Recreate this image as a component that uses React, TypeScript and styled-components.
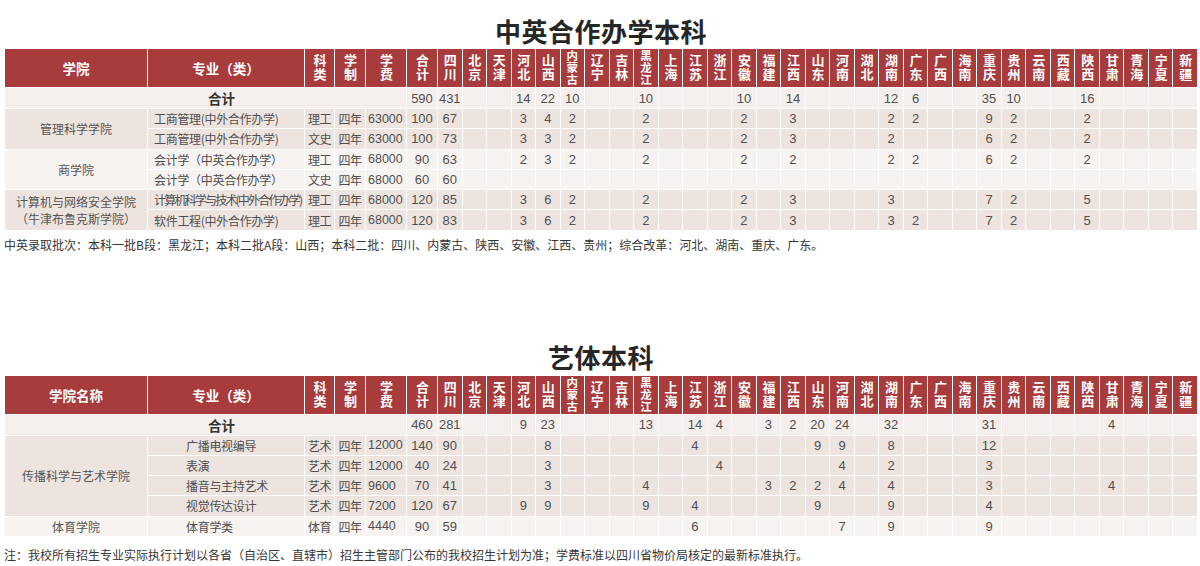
import React from "react";
import styled, { createGlobalStyle } from "styled-components";

const GlobalStyle = createGlobalStyle`
  html, body { margin: 0; padding: 0; background: #ffffff; }
  body { font-family: "Noto Sans CJK SC", "Noto Sans", sans-serif; color: #444; }
`;

const PROVINCES = [
  "四川", "北京", "天津", "河北", "山西", "内蒙古", "辽宁", "吉林", "黑龙江", "上海",
  "江苏", "浙江", "安徽", "福建", "江西", "山东", "河南", "湖北", "湖南", "广东",
  "广西", "海南", "重庆", "贵州", "云南", "西藏", "陕西", "甘肃", "青海", "宁夏", "新疆",
];

type Values = Record<string, number>;
type MajorRow = { major: string; kind: string; years: string; fee: string; total: number; v: Values; tight?: boolean };
type Group = { name: string[]; shade: "dark" | "light"; rows: MajorRow[] };
type TableData = { collegeLabel: string; indent: number; rowH: number; total: { total: number; v: Values }; groups: Group[] };

const coop: TableData = {
  collegeLabel: "学院",
  indent: 6,
  rowH: 20.3,
  total: { total: 590, v: { 四川: 431, 河北: 14, 山西: 22, 内蒙古: 10, 黑龙江: 10, 安徽: 10, 江西: 14, 湖南: 12, 广东: 6, 重庆: 35, 贵州: 10, 陕西: 16 } },
  groups: [
    {
      name: ["管理科学学院"], shade: "dark", rows: [
        { major: "工商管理(中外合作办学)", kind: "理工", years: "四年", fee: "63000", total: 100, v: { 四川: 67, 河北: 3, 山西: 4, 内蒙古: 2, 黑龙江: 2, 安徽: 2, 江西: 3, 湖南: 2, 广东: 2, 重庆: 9, 贵州: 2, 陕西: 2 } },
        { major: "工商管理(中外合作办学)", kind: "文史", years: "四年", fee: "63000", total: 100, v: { 四川: 73, 河北: 3, 山西: 3, 内蒙古: 2, 黑龙江: 2, 安徽: 2, 江西: 3, 湖南: 2, 重庆: 6, 贵州: 2, 陕西: 2 } },
      ],
    },
    {
      name: ["商学院"], shade: "light", rows: [
        { major: "会计学（中英合作办学）", kind: "理工", years: "四年", fee: "68000", total: 90, v: { 四川: 63, 河北: 2, 山西: 3, 内蒙古: 2, 黑龙江: 2, 安徽: 2, 江西: 2, 湖南: 2, 广东: 2, 重庆: 6, 贵州: 2, 陕西: 2 } },
        { major: "会计学（中英合作办学）", kind: "文史", years: "四年", fee: "68000", total: 60, v: { 四川: 60 } },
      ],
    },
    {
      name: ["计算机与网络安全学院", "（牛津布鲁克斯学院）"], shade: "dark", rows: [
        { major: "计算机科学与技术(中外合作办学)", tight: true, kind: "理工", years: "四年", fee: "68000", total: 120, v: { 四川: 85, 河北: 3, 山西: 6, 内蒙古: 2, 黑龙江: 2, 安徽: 2, 江西: 3, 湖南: 3, 重庆: 7, 贵州: 2, 陕西: 5 } },
        { major: "软件工程(中外合作办学)", kind: "理工", years: "四年", fee: "68000", total: 120, v: { 四川: 83, 河北: 3, 山西: 6, 内蒙古: 2, 黑龙江: 2, 安徽: 2, 江西: 3, 湖南: 3, 广东: 2, 重庆: 7, 贵州: 2, 陕西: 5 } },
      ],
    },
  ],
};

const arts: TableData = {
  collegeLabel: "学院名称",
  indent: 38,
  rowH: 20.2,
  total: { total: 460, v: { 四川: 281, 河北: 9, 山西: 23, 黑龙江: 13, 江苏: 14, 浙江: 4, 福建: 3, 江西: 2, 山东: 20, 河南: 24, 湖南: 32, 重庆: 31, 甘肃: 4 } },
  groups: [
    {
      name: ["传播科学与艺术学院"], shade: "dark", rows: [
        { major: "广播电视编导", kind: "艺术", years: "四年", fee: "12000", total: 140, v: { 四川: 90, 山西: 8, 江苏: 4, 山东: 9, 河南: 9, 湖南: 8, 重庆: 12 } },
        { major: "表演", kind: "艺术", years: "四年", fee: "12000", total: 40, v: { 四川: 24, 山西: 3, 浙江: 4, 河南: 4, 湖南: 2, 重庆: 3 } },
        { major: "播音与主持艺术", kind: "艺术", years: "四年", fee: "9600", total: 70, v: { 四川: 41, 山西: 3, 黑龙江: 4, 福建: 3, 江西: 2, 山东: 2, 河南: 4, 湖南: 4, 重庆: 3, 甘肃: 4 } },
        { major: "视觉传达设计", kind: "艺术", years: "四年", fee: "7200", total: 120, v: { 四川: 67, 河北: 9, 山西: 9, 黑龙江: 9, 江苏: 4, 山东: 9, 湖南: 9, 重庆: 4 } },
      ],
    },
    {
      name: ["体育学院"], shade: "light", rows: [
        { major: "体育学类", kind: "体育", years: "四年", fee: "4440", total: 90, v: { 四川: 59, 江苏: 6, 河南: 7, 湖南: 9, 重庆: 9 } },
      ],
    },
  ],
};

const SHADES = { total: "#f4efed", dark: "#ede4e0", light: "#f7f3f1" };

const Page = styled.div`
  width: 1200px;
  height: 566px;
  overflow: hidden;
  box-sizing: border-box;
  padding-left: 4px;
  display: flex;
  flex-direction: column;
`;

const Title = styled.h1<{ $top: number; $bottom: number }>`
  width: 1194px;
  margin: ${(p) => p.$top}px 0 ${(p) => p.$bottom}px;
  font-family: "Noto Sans CJK SC", sans-serif;
  font-size: 26px;
  line-height: 26px;
  font-weight: 700;
  color: #262626;
  text-align: center;
  letter-spacing: 0.5px;
`;

const Table = styled.table`
  width: 1194px;
  border-collapse: collapse;
  table-layout: fixed;
`;

const Col = styled.col<{ $w?: number }>`
  width: ${(p) => (p.$w ? `${p.$w}px` : "auto")};
`;

const HeadRow = styled.tr`
  height: 39px;
`;

const HeadCell = styled.th`
  background: #a83b3c;
  color: #ffffff;
  border: 1px solid #ffffff;
  padding: 0;
  font-family: "Noto Sans CJK SC", sans-serif;
  font-weight: 700;
  font-size: 13.5px;
  text-align: center;
  vertical-align: middle;
`;

const HeadBox = styled.div`
  height: 37px;
  display: flex;
  align-items: center;
  justify-content: center;
`;

const Vertical = styled.span<{ $small?: boolean }>`
  writing-mode: vertical-rl;
  text-orientation: upright;
  font-size: ${(p) => (p.$small ? "11.5px" : "13px")};
  line-height: 14px;
  letter-spacing: ${(p) => (p.$small ? "0.3px" : "0.6px")};
  white-space: nowrap;
`;

const BodyRow = styled.tr<{ $shade: keyof typeof SHADES; $h: number }>`
  height: ${(p) => p.$h}px;
  background: ${(p) => SHADES[p.$shade]};
`;

const Cell = styled.td`
  border: 1px solid #ffffff;
  padding: 0;
  white-space: nowrap;
  overflow: hidden;
  vertical-align: middle;
  color: #4a4a4a;
`;

const TotalLabel = styled(Cell)`
  padding-left: 32px;
  text-align: center;
  font-family: "Noto Sans CJK SC", sans-serif;
  font-weight: 700;
  font-size: 13.5px;
  color: #333;
`;

const GroupCell = styled(Cell)`
  text-align: center;
  font-family: "Noto Sans CJK SC", sans-serif;
  font-size: 12px;
  line-height: 17px;
  color: #555;
`;

const MajorCell = styled(Cell)<{ $indent: number; $tight?: boolean }>`
  padding-left: ${(p) => p.$indent}px;
  font-family: "Noto Sans CJK SC", sans-serif;
  font-size: 12px;
  letter-spacing: ${(p) => (p.$tight ? "-1.8px" : "-0.3px")};
  color: #4f4f4f;
`;

const TextCell = styled(Cell)`
  text-align: center;
  font-family: "Noto Sans CJK SC", sans-serif;
  font-size: 12px;
  letter-spacing: -0.5px;
  color: #4f4f4f;
`;

const FeeCell = styled(Cell)`
  padding-left: 2px;
  font-family: "Liberation Sans", sans-serif;
  font-size: 12.5px;
  color: #505050;
`;

const Num = styled(Cell)`
  text-align: center;
  font-family: "Liberation Sans", sans-serif;
  font-size: 13px;
  color: #505050;
`;

const Note = styled.p<{ $top: number }>`
  margin: ${(p) => p.$top}px 0 0;
  font-family: "Noto Sans CJK SC", sans-serif;
  font-size: 12px;
  line-height: 16px;
  color: #363636;
  white-space: nowrap;
`;

const ProvinceCells = ({ v }: { v: Values }) => (
  <>
    {PROVINCES.map((p) => (
      <Num key={p}>{v[p] ?? ""}</Num>
    ))}
  </>
);

const DataTable = ({ data }: { data: TableData }) => (
  <Table>
    <colgroup>
      <Col $w={143} />
      <Col $w={157} />
      <Col $w={30} />
      <Col $w={31} />
      <Col $w={41} />
      <Col $w={31} />
      {PROVINCES.map((p) => (
        <Col key={p} />
      ))}
    </colgroup>
    <thead>
      <HeadRow>
        <HeadCell>{data.collegeLabel}</HeadCell>
        <HeadCell>专业（类）</HeadCell>
        {["科类", "学制", "学费", "合计", ...PROVINCES].map((l) => (
          <HeadCell key={l}>
            <HeadBox>
              <Vertical $small={l.length > 2}>{l}</Vertical>
            </HeadBox>
          </HeadCell>
        ))}
      </HeadRow>
    </thead>
    <tbody>
      <BodyRow $shade="total" $h={21}>
        <TotalLabel colSpan={5}>合计</TotalLabel>
        <Num>{data.total.total}</Num>
        <ProvinceCells v={data.total.v} />
      </BodyRow>
      {data.groups.map((g) =>
        g.rows.map((r, i) => (
          <BodyRow key={`${g.name[0]}-${i}`} $shade={g.shade} $h={data.rowH}>
            {i === 0 && (
              <GroupCell rowSpan={g.rows.length}>
                {g.name.map((n) => (
                  <div key={n}>{n}</div>
                ))}
              </GroupCell>
            )}
            <MajorCell $indent={data.indent} $tight={r.tight}>
              {r.major}
            </MajorCell>
            <TextCell>{r.kind}</TextCell>
            <TextCell>{r.years}</TextCell>
            <FeeCell>{r.fee}</FeeCell>
            <Num>{r.total}</Num>
            <ProvinceCells v={r.v} />
          </BodyRow>
        ))
      )}
    </tbody>
  </Table>
);

export default function App() {
  return (
    <>
      <GlobalStyle />
      <Page>
        <Title $top={18} $bottom={4}>中英合作办学本科</Title>
        <DataTable data={coop} />
        <Note $top={6}>
          中英录取批次：本科一批B段：黑龙江；本科二批A段：山西；本科二批：四川、内蒙古、陕西、安徽、江西、贵州；综合改革：河北、湖南、重庆、广东。
        </Note>
        <Title $top={91} $bottom={5}>艺体本科</Title>
        <DataTable data={arts} />
        <Note $top={10}>
          注：我校所有招生专业实际执行计划以各省（自治区、直辖市）招生主管部门公布的我校招生计划为准；学费标准以四川省物价局核定的最新标准执行。
        </Note>
      </Page>
    </>
  );
}
